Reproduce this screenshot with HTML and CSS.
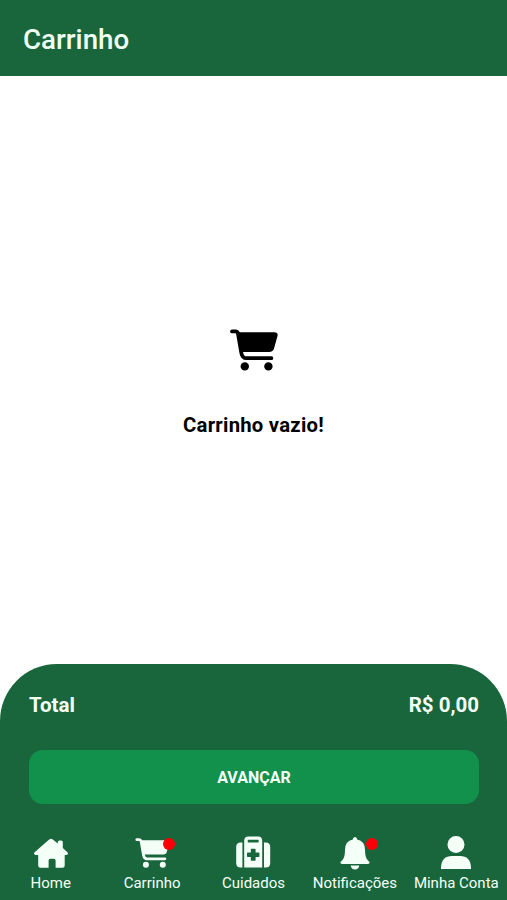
FILE: index.html
```html
<!DOCTYPE html>
<html lang="pt-BR">
  <head>
    <meta charset="UTF-8" />
    <meta name="viewport" content="width=device-width, initial-scale=1.0" />
    <title>Carrinho</title>
    <link rel="stylesheet" href="styles.css">
  </head>
  <body>
    <svg class="symbols">
      <symbol id="cart" viewBox="0 0 48 42">
        <path d="M2 2.400h3.500q2 0 2.500 2.200l3.400 19.600q.9 5 5 5h25" fill="none" stroke="currentColor" stroke-width="3.800" stroke-linecap="round" stroke-linejoin="round" />
        <path d="M8 3.200h36.500q3.800 0 3 3.800l-3.400 12.200q-1 3.800-5 3.800H12z" fill="currentColor" />
        <circle cx="14.800" cy="37.400" r="4.200" fill="currentColor" />
        <circle cx="38.400" cy="37.400" r="4.200" fill="currentColor" />
      </symbol>
    </svg>

    <header class="header">
      <h1>Carrinho</h1>
    </header>

    <main class="empty">
      <svg class="empty-icon"><use href="#cart" /></svg>
      <p>Carrinho vazio!</p>
    </main>

    <footer class="footer">
      <div class="total">
        <span>Total</span>
        <span>R$ 0,00</span>
      </div>
      <button class="next">AVANÇAR</button>

      <nav class="menu">
        <a class="item">
          <span class="icon">
            <svg width="36" height="32" viewBox="0 0 36 32">
              <path d="M16.2 2.4q1.8-1.5 3.6 0l5 4.2V5.1q0-1.6 1.6-1.6h1.8q1.6 0 1.6 1.6v6l4.600 4.100q1 1 .5 1.900-.4.8-1.500.8h-1.700v10.600q0 2.300-2.300 2.300h-6.800v-7.300q0-1.800-1.800-1.800h-3.400q-1.800 0-1.800 1.800v7.300H7.500q-2.300 0-2.300-2.300V17.900H2.600q-1.100 0-1.500-.8-.5-.9.5-1.900z" />
            </svg>
          </span>
          <span>Home</span>
        </a>
        <a class="item">
          <span class="icon">
            <svg width="35" height="30"><use href="#cart" /></svg>
            <i class="dot"></i>
          </span>
          <span>Carrinho</span>
        </a>
        <a class="item">
          <span class="icon">
            <svg width="36" height="34" viewBox="0 0 36 34">
              <path d="M7.400 6.500v25.100H5.700q-4.500 0-4.500-4.500V11q0-4.500 4.500-4.500zM29 6.500v25.100h1.700q4.500 0 4.500-4.500V11q0-4.500-4.500-4.500z" />
              <path fill-rule="evenodd" d="M9.200 31.600V4.800Q9.200.4 13.500.4h9.400q4.300 0 4.300 4.400v26.800zM13.500 3.700q-.8 0-.8.8v1.300q0 .8.8.8h9.400q.8 0 .8-.8V4.500q0-.8-.8-.8zM16.500 12.800q-.7 0-.7.7v3.100h-3.100q-.7 0-.7.7v3q0 .7.7.7h3.100v3.100q0 .7.7.7h3.400q.7 0 .7-.7V21h3.100q.7 0 .7-.7v-3q0-.7-.7-.7h-3.100v-3.100q0-.7-.7-.7z" />
            </svg>
          </span>
          <span>Cuidados</span>
        </a>
        <a class="item">
          <span class="icon">
            <svg width="32" height="34" viewBox="0 0 32 34">
              <path d="M16 1q2.100 0 2.200 2.500Q26 5 26 14q0 8.500 3.500 11 1.500 1.200 1 2.100-.4.900-1.800.900H3.300q-1.400 0-1.800-.9-.5-.9 1-2.100Q6 22.500 6 14q0-9 7.800-10.500Q13.900 1 16 1zM11.700 29.500h8.600q-.7 4-4.300 4t-4.300-4z" />
            </svg>
            <i class="dot bell-dot"></i>
          </span>
          <span>Notificações</span>
        </a>
        <a class="item">
          <span class="icon">
            <svg width="32" height="34" viewBox="0 0 32 34">
              <circle cx="16" cy="8.500" r="8.500" />
              <path d="M1 33v-1.500Q1.500 20 12 20h8q10.500 0 11 11.500V33z" />
            </svg>
          </span>
          <span>Minha Conta</span>
        </a>
      </nav>
    </footer>
  </body>
</html>
```

FILE: styles.css
```css
* {
  box-sizing: border-box;
  margin: 0px;
  padding: 0px;
}
body {
  height: 100vh;
  display: flex;
  flex-direction: column;
  font-family: Roboto, "Liberation Sans", sans-serif;
  background-color: white;
  overflow: hidden;
}
.symbols {
  display: none;
}
.header {
  height: 76px;
  padding: 2px 23px 0;
  display: flex;
  align-items: center;
  background-color: #1a663c;
  color: #f0fff4;
}
.header h1 {
  font-size: 27.7px;
  font-weight: 500;
}
.empty {
  flex: 1;
  display: flex;
  flex-direction: column;
  align-items: center;
  justify-content: center;
  gap: 42px;
  padding-top: 26px;
  color: black;
}
.empty-icon {
  width: 48px;
  height: 42px;
}
.empty p {
  font-size: 20.3px;
  font-weight: 700;
  line-height: 24px;
  letter-spacing: 0.25px;
}
.footer {
  height: 236px;
  padding-top: 29px;
  border-radius: 57px 57px 0 0;
  background-color: #1a663c;
  color: #f4fff7;
}
.total {
  display: flex;
  justify-content: space-between;
  padding: 0 28px 0 29px;
  font-size: 20.5px;
  font-weight: 700;
  line-height: 24px;
}
.next {
  display: block;
  width: 450px;
  height: 54px;
  margin: 33px auto 0 29px;
  border: none;
  border-radius: 14px;
  background-color: #12914d;
  color: #f4fff7;
  font-family: inherit;
  font-size: 16px;
  font-weight: 700;
}
.menu {
  display: grid;
  grid-template-columns: repeat(5, 1fr);
  margin-top: 31px;
}
.item {
  display: flex;
  flex-direction: column;
  align-items: center;
  font-size: 15px;
  line-height: 18px;
  white-space: nowrap;
}
.icon {
  height: 36px;
  margin-bottom: 3px;
  display: flex;
  align-items: center;
  position: relative;
}
.icon svg {
  fill: currentColor;
}
.dot {
  width: 12px;
  height: 12px;
  border-radius: 50%;
  background-color: #fb0007;
  position: absolute;
  top: 3px;
  right: -5px;
}
.bell-dot {
  right: -7px;
}
```
